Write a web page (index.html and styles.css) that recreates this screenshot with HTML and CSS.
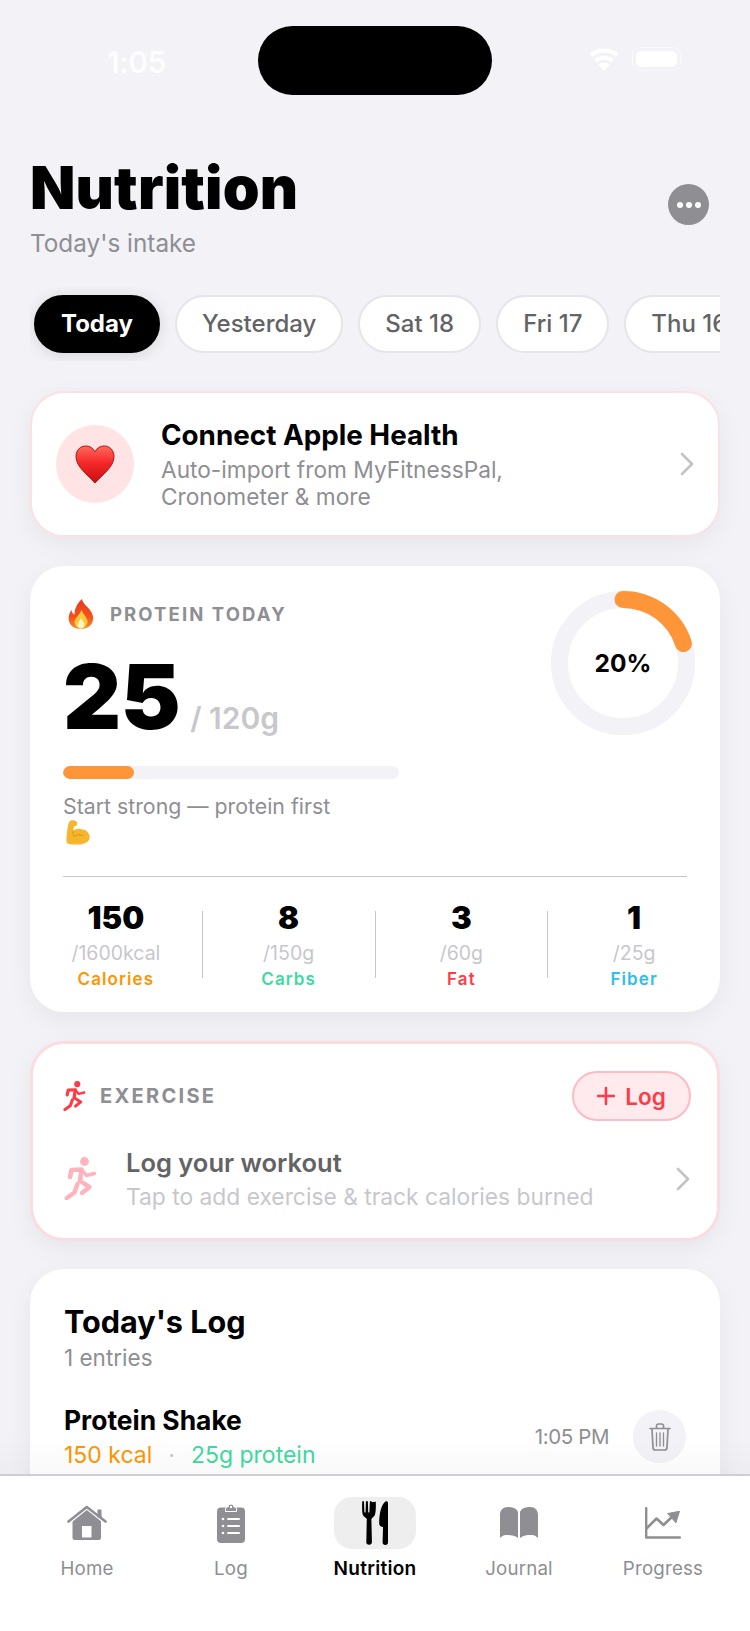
FILE: index.html
```html
<!DOCTYPE html>
<html lang="en">
<head>
  <meta charset="UTF-8" />
  <meta name="viewport" content="width=device-width, initial-scale=1.0"/>
  <title>Nutrition</title>
  <link rel="stylesheet" href="styles.css">
</head>
<body>

  <svg class="icon-defs" width="0" height="0">
    <defs>
      <symbol id="runner" viewBox="0 0 33 43">
        <circle cx="20.5" cy="4.5" r="4.4" fill="currentColor" />
        <g fill="none" stroke="currentColor" stroke-linecap="round" stroke-linejoin="round">
          <path d="M6 20 L7.5 13 L17.5 12.5 L16 24" stroke-width="4.6" />
          <path d="M18 13 L22.5 18.5 L30.5 16.5" stroke-width="3.4" />
          <path d="M16 24 L25.5 30 L18 36" stroke-width="4.4" />
          <path d="M13.5 27 L10.5 35.5 L2.8 41" stroke-width="4.4" />
        </g>
      </symbol>
      <symbol id="chevron" viewBox="0 0 14 24">
        <path d="M2 2 L12 12 L2 22" fill="none" stroke="currentColor" stroke-width="2.6" stroke-linecap="round" stroke-linejoin="round" />
      </symbol>
    </defs>
  </svg>

  <div class="app">
    <div class="status-bar">
      <span class="status-time">1:05</span>
      <div class="island"></div>
      <div class="status-icons">
        <svg class="wifi" width="32" height="23" viewBox="0 0 32 23">
          <path d="M16 23 L10.6 16.6 A8 8 0 0 1 21.4 16.6 Z" fill="#fff" />
          <path d="M7.4 12.9 A13 13 0 0 1 24.6 12.9" fill="none" stroke="#fff" stroke-width="4" />
          <path d="M2.6 7.6 A20.5 20.5 0 0 1 29.4 7.6" fill="none" stroke="#fff" stroke-width="4" />
        </svg>
        <div class="battery"><div class="battery-level"></div></div>
      </div>
    </div>

    <main>
      <header class="page-head">
        <div>
          <h1>Nutrition</h1>
          <p class="page-sub">Today's intake</p>
        </div>
        <button class="more-btn"><i></i><i></i><i></i></button>
      </header>

      <div class="day-strip">
        <span class="chip active">Today</span>
        <span class="chip">Yesterday</span>
        <span class="chip">Sat 18</span>
        <span class="chip">Fri 17</span>
        <span class="chip">Thu 16</span>
      </div>

      <section class="card health-card">
        <div class="health-icon">
          <svg width="40" height="39" viewBox="0 0 40 39">
            <defs>
              <linearGradient id="heartFill" x1="0" y1="0" x2="0" y2="1">
                <stop offset="0" stop-color="#ff6a5e" />
                <stop offset="0.45" stop-color="#f5282a" />
                <stop offset="1" stop-color="#c8100f" />
              </linearGradient>
            </defs>
            <path d="M20 38 C13 30 1 22 1 11.5 C1 5 5.6 1 10.8 1 C14.8 1 18 3 20 6.8 C22 3 25.2 1 29.2 1 C34.4 1 39 5 39 11.5 C39 22 27 30 20 38 Z" fill="url(#heartFill)" stroke="#b5100f" stroke-width="1" />
          </svg>
        </div>
        <div class="health-text">
          <h2>Connect Apple Health</h2>
          <p>Auto-import from MyFitnessPal,<br>Cronometer &amp; more</p>
        </div>
        <svg class="chevron" width="14" height="24"><use href="#chevron" /></svg>
      </section>

      <section class="card protein-card">
        <div class="protein-top">
          <div class="protein-main">
            <div class="section-label">
              <svg width="26" height="30" viewBox="0 0 26 30">
                <defs>
                  <linearGradient id="flameFill" x1="0" y1="0" x2="0" y2="1">
                    <stop offset="0" stop-color="#e8391c" />
                    <stop offset="0.6" stop-color="#f4521f" />
                    <stop offset="1" stop-color="#fb8c25" />
                  </linearGradient>
                </defs>
                <path d="M14 0 C15 5 19 7 22 11 C25 15 26 19 24.5 23 C23 27 18.5 30 13 30 C7 30 2 27 1 22 C0 18 1.5 13.5 3.5 11 C3.8 13.5 5 15 6.5 15.5 C6.5 9.5 9.5 4 14 0 Z" fill="url(#flameFill)" />
                <path d="M13.5 11 C14.5 14.5 18.5 17.5 19.5 21.5 C20 26 16.5 29.5 13 29.5 C9.5 29.5 6 26.5 6.5 22.5 C7 19 11.5 16 13.5 11 Z" fill="#fdc83a" />
                <path d="M13 19 C14 21.5 16.5 23.5 16.5 25.8 C16.5 28 14.6 29.5 13 29.5 C11.2 29.5 9.5 28 9.5 26 C9.5 23.8 12 22 13 19 Z" fill="#fff3c4" />
              </svg>
              <span class="label-text protein-label">PROTEIN TODAY</span>
            </div>
            <div class="protein-amount"><span class="protein-value">25</span><span class="protein-goal">/ 120g</span></div>
            <div class="bar"><div class="bar-fill" style="width: 21%"></div></div>
            <p class="protein-note">Start strong — protein first</p>
            <svg class="muscle" width="24" height="25" viewBox="0 0 24 25">
              <path d="M5 .6 C8 -.6 11.4 1 11.4 3.6 C11.4 5.6 9.4 6.6 7.8 6.6 L7.2 11 C9 9 13 8.2 15.2 9.2 C19.6 9.2 23.6 12.4 23.6 17 C23.6 22.4 18 24.6 11 24.6 C6 24.6 2 24.4 .8 22.4 C-.2 20 1 12 2 6 C2.4 3.5 3 1.5 5 .6 Z" fill="#f6b62c" />
              <path d="M7.2 11 C6.6 13 6.8 15 8 16.4 M8 16.4 C10.5 14.4 14 14.2 17 15.6" fill="none" stroke="#e09414" stroke-width="1" stroke-linecap="round" />
            </svg>
          </div>
          <div class="ring">
            <svg width="144" height="144" viewBox="0 0 144 144">
              <circle cx="72" cy="72" r="63.5" fill="none" stroke="#f2f2f7" stroke-width="17" />
              <!-- 20% of the circumference, starting at 12 o'clock -->
              <circle class="ring-arc" cx="72" cy="72" r="63.5" fill="none" stroke="#ff9539" stroke-width="17" stroke-linecap="round" stroke-dasharray="79.8 399" transform="rotate(-90 72 72)" />
            </svg>
            <span class="ring-text">20%</span>
          </div>
        </div>

        <div class="stats">
          <div class="stat">
            <b>150</b>
            <span class="stat-goal">/1600kcal</span>
            <span class="stat-name calories">Calories</span>
          </div>
          <div class="stat">
            <b>8</b>
            <span class="stat-goal">/150g</span>
            <span class="stat-name carbs">Carbs</span>
          </div>
          <div class="stat">
            <b>3</b>
            <span class="stat-goal">/60g</span>
            <span class="stat-name fat">Fat</span>
          </div>
          <div class="stat">
            <b>1</b>
            <span class="stat-goal">/25g</span>
            <span class="stat-name fiber">Fiber</span>
          </div>
        </div>
      </section>

      <section class="card exercise-card">
        <div class="exercise-head">
          <div class="section-label">
            <svg class="runner-small" width="23" height="30"><use href="#runner" /></svg>
            <span class="label-text">EXERCISE</span>
          </div>
          <button class="log-btn">
            <svg width="18" height="18" viewBox="0 0 18 18"><path d="M9 1 V17 M1 9 H17" stroke="currentColor" stroke-width="2.6" stroke-linecap="round" /></svg>
            Log
          </button>
        </div>
        <div class="exercise-row">
          <svg class="runner-big" width="33" height="43"><use href="#runner" /></svg>
          <div class="exercise-text">
            <h3>Log your workout</h3>
            <p>Tap to add exercise &amp; track calories burned</p>
          </div>
          <svg class="chevron" width="14" height="24"><use href="#chevron" /></svg>
        </div>
      </section>

      <section class="card log-card">
        <h2>Today's Log</h2>
        <p class="log-count">1 entries</p>
        <div class="log-entry">
          <div class="log-info">
            <h4>Protein Shake</h4>
            <p><span class="calories">150 kcal</span><span class="dot">·</span><span class="carbs">25g protein</span></p>
          </div>
          <span class="log-time">1:05 PM</span>
          <button class="trash-btn">
            <svg width="22" height="28" viewBox="0 0 22 28" fill="none" stroke="#8e8e93" stroke-width="1.7" stroke-linecap="round" stroke-linejoin="round">
              <path d="M1 5.5 H21" />
              <path d="M7.5 5 V3 A2 2 0 0 1 9.5 1 H12.5 A2 2 0 0 1 14.5 3 V5" />
              <path d="M3 6 L4 24.5 A2.5 2.5 0 0 0 6.5 27 H15.5 A2.5 2.5 0 0 0 18 24.5 L19 6" />
              <path d="M7.5 10 V23 M11 10 V23 M14.5 10 V23" stroke-width="1.3" />
            </svg>
          </button>
        </div>
      </section>
    </main>

    <nav class="tabbar">
      <a class="tab">
        <span class="tab-icon">
          <svg width="40" height="36" viewBox="0 0 40 36">
            <path d="M5.5 16 L20 4 L34 16 V32.5 A2.5 2.5 0 0 1 31.5 35 H8 A2.5 2.5 0 0 1 5.5 32.5 Z" fill="#8e8e93" />
            <path d="M1.5 16.5 L19.8 1.8 L38.5 16.5" fill="none" stroke="#fff" stroke-width="5" />
            <path d="M1.5 16.5 L19.8 2 L38.5 16.5" fill="none" stroke="#8e8e93" stroke-width="2.6" stroke-linecap="round" stroke-linejoin="round" />
            <rect x="30.5" y="4.5" width="4" height="8" fill="#8e8e93" />
            <rect x="15" y="21" width="9.5" height="11.5" fill="#fff" />
          </svg>
        </span>
        <span>Home</span>
      </a>
      <a class="tab">
        <span class="tab-icon">
          <svg width="28" height="40" viewBox="0 0 28 40">
            <rect x="0" y="4.5" width="28" height="35.5" rx="4" fill="#8e8e93" />
            <path d="M8.5 8.5 V6 A2 2 0 0 1 10.5 4 H11 A3 3 0 0 1 17 4 H17.5 A2 2 0 0 1 19.5 6 V8.5 Z" fill="#8e8e93" stroke="#fff" stroke-width="1" />
            <circle cx="14" cy="4" r="1.2" fill="#fff" />
            <g fill="#fff">
              <circle cx="6" cy="16" r="1.3" />
              <circle cx="6" cy="23" r="1.3" />
              <circle cx="6" cy="30" r="1.3" />
              <rect x="10" y="15" width="13" height="2" rx="1" />
              <rect x="10" y="22" width="13" height="2" rx="1" />
              <rect x="10" y="29" width="13" height="2" rx="1" />
            </g>
          </svg>
        </span>
        <span>Log</span>
      </a>
      <a class="tab tab-active">
        <span class="tab-icon">
          <svg width="26" height="44" viewBox="0 0 26 44" fill="#000">
            <path d="M.2 1 A.9 .9 0 0 1 2 1 L2.4 11 A.6 .6 0 0 0 3.6 11 L3.9 1 A1 1 0 0 1 5.9 1 L6.2 11 A.6 .6 0 0 0 7.4 11 L7.8 1 A.9 .9 0 0 1 9.6 1 L9.9 1 L12.4 1 A.9 .9 0 0 1 13.8 1 C14 7 13.8 12 12.6 14.5 C11.6 16.2 10 16.8 9.4 18 L9.9 41 A2.7 2.7 0 0 1 4.3 41 L4.8 18 C4 16.6 1.8 16 .9 14 C0 11.5 0 7 .2 1 Z" />
            <path d="M23.8 .3 C24.8 0 26 .6 26 2 V41.2 A2.7 2.7 0 0 1 20.6 41.2 L21 26 C19.2 26 17.2 25 17.2 22.4 C17.2 13 19 3.5 23.8 .3 Z" />
          </svg>
        </span>
        <span>Nutrition</span>
      </a>
      <a class="tab">
        <span class="tab-icon">
          <svg width="38" height="32" viewBox="0 0 38 32" fill="#8e8e93">
            <path d="M0 8 C0 3 3 0 8 0 C13 0 18 2 18 6 V31 C15 28.5 11 28 7 28 C4.5 28 2.5 28.6 .8 30.6 C.2 31 0 30.6 0 30 Z" />
            <path d="M38 8 C38 3 35 0 30 0 C25 0 20 2 20 6 V31 C23 28.5 27 28 31 28 C33.5 28 35.5 28.6 37.2 30.6 C37.8 31 38 30.6 38 30 Z" />
          </svg>
        </span>
        <span>Journal</span>
      </a>
      <a class="tab">
        <span class="tab-icon">
          <svg width="36" height="32" viewBox="0 0 36 32" fill="none" stroke="#8e8e93" stroke-width="2.4" stroke-linecap="round" stroke-linejoin="round">
            <path d="M1.2 1.2 V30.5 H34.8" />
            <path d="M2 21 L11.5 11.5 L18.5 18 L29 8" stroke-width="2.6" />
            <path d="M23 6.5 L34.5 4.3 L31 15.5 Z" fill="#8e8e93" stroke-width="1" />
          </svg>
        </span>
        <span>Progress</span>
      </a>
    </nav>
  </div>

</body>
</html>
```

FILE: styles.css
```css
* {
  box-sizing: border-box;
}

body {
  font-family: 'Inter', 'Liberation Sans', sans-serif;
  margin: 0;
  padding: 0;
  background-color: #f2f2f7;
  color: #000;
}

h1, h2, h3, h4, p {
  margin: 0;
}

button {
  font-family: inherit;
  cursor: pointer;
}

.icon-defs {
  display: block;
  height: 0;
}

.app {
  position: relative;
  width: 750px;
  height: 1631px;
  overflow: hidden;
}

/* status bar */
.status-bar {
  display: flex;
  align-items: center;
  height: 68px;
  margin-top: 26px;
  padding-left: 107px;
}

.status-time {
  width: 151px;
  margin-top: 3px;
  color: #fff;
  font-size: 30px;
  font-weight: 600;
  letter-spacing: -0.5px;
  opacity: 0.85;
}

.island {
  width: 234px;
  height: 69px;
  background-color: #000;
  border-radius: 35px;
}

.status-icons {
  display: flex;
  align-items: center;
  gap: 12px;
  margin-left: 96px;
  margin-top: -2px;
}

.battery {
  position: relative;
  width: 49px;
  height: 24px;
  padding: 3px;
  border: 1px solid #f9f9fc;
  border-radius: 8px;
}

.battery-level {
  width: 100%;
  height: 100%;
  background-color: #fff;
  border-radius: 5px;
}

/* heading */
main {
  padding: 0 30px;
}

.page-head {
  display: flex;
  justify-content: space-between;
  align-items: flex-end;
  margin-top: 60px;
  padding-right: 11px;
}

h1 {
  font-size: 59px;
  font-weight: 900;
  line-height: 68px;
  letter-spacing: 0.2px;
}

.page-sub {
  margin-top: 6px;
  color: #8e8e93;
  font-size: 24.3px;
  line-height: 30px;
}

.more-btn {
  display: flex;
  align-items: center;
  justify-content: center;
  gap: 3px;
  width: 41px;
  height: 41px;
  margin-bottom: 33px;
  padding: 0;
  background-color: #8e8e93;
  border: none;
  border-radius: 50%;
}

.more-btn i {
  width: 6px;
  height: 6px;
  background-color: #fff;
  border-radius: 50%;
}

/* day chips */
.day-strip {
  display: flex;
  gap: 15px;
  margin-top: 29px;
  padding: 8px 4px;
  overflow: hidden;
}

.chip {
  flex-shrink: 0;
  height: 58px;
  padding: 0 25px;
  background-color: #fff;
  border: 2px solid #e5e5ea;
  border-radius: 29px;
  color: #636366;
  font-size: 24px;
  font-weight: 500;
  line-height: 54px;
}

.chip.active {
  background-color: #000;
  border-color: #000;
  color: #fff;
  font-weight: 700;
  box-shadow: 0 2px 16px rgba(0, 0, 0, 0.12);
}

/* cards */
.card {
  background-color: #fff;
  border-radius: 34px;
  box-shadow: 0 8px 26px rgba(0, 0, 0, 0.055);
}

.health-card {
  display: flex;
  align-items: center;
  height: 146px;
  margin-top: 30px;
  padding: 0 24px 0 24px;
  border: 2px solid #fbe1e4;
}

.health-icon {
  display: flex;
  align-items: center;
  justify-content: center;
  width: 78px;
  height: 78px;
  background-color: #ffe3e5;
  border-radius: 50%;
}

.health-text {
  flex: 1;
  margin-top: -2px;
  margin-left: 27px;
}

.health-text h2 {
  font-size: 27.8px;
  font-weight: 700;
  line-height: 36px;
}

.health-text p {
  margin-top: 3px;
  color: #8e8e93;
  font-size: 22.7px;
  line-height: 27px;
}

.chevron {
  color: #c2c2c7;
  flex-shrink: 0;
}

.protein-card {
  margin-top: 29px;
  padding: 24px 33px 0;
  height: 446px;
}

.protein-top {
  display: flex;
  justify-content: space-between;
  height: 287px;
  border-bottom: 1px solid #c6c6c8;
}

.section-label {
  display: flex;
  align-items: center;
}

.protein-main {
  padding-top: 9px;
}

.protein-main .section-label svg {
  margin-left: 5px;
}

.label-text {
  margin-left: 14px;
  color: #8e8e93;
  font-size: 20px;
  font-weight: 700;
  letter-spacing: 2.3px;
}

.protein-label {
  margin-left: 16px;
  font-size: 18.5px;
  letter-spacing: 2.1px;
}

.protein-amount {
  display: flex;
  align-items: baseline;
  margin-top: 18px;
  height: 100px;
}

.protein-value {
  font-size: 90px;
  font-weight: 900;
  line-height: 100px;
  letter-spacing: -0.5px;
}

.protein-goal {
  margin-left: 10px;
  color: #c7c7cc;
  font-size: 30px;
  font-weight: 600;
}

.bar {
  width: 336px;
  height: 13px;
  margin-top: 19px;
  background-color: #f2f2f7;
  border-radius: 7px;
  overflow: hidden;
}

.bar-fill {
  height: 100%;
  background-color: #ff9539;
  border-radius: 7px;
}

.protein-note {
  margin-top: 14px;
  color: #8e8e93;
  font-size: 21.3px;
  line-height: 26px;
}

.muscle {
  display: block;
  margin: 1px 0 0 3px;
}

.ring {
  position: relative;
  width: 144px;
  height: 144px;
  margin-top: 1px;
  margin-right: -8px;
  flex-shrink: 0;
}

.ring-text {
  position: absolute;
  inset: 0;
  display: flex;
  align-items: center;
  justify-content: center;
  font-size: 24.5px;
  font-weight: 700;
}

/* the four columns span the whole card, wider than the divider above them */
.stats {
  display: flex;
  margin: 34px -33px 0;
}

.stat {
  display: flex;
  flex-direction: column;
  align-items: center;
  flex: 1;
  height: 67px;
  border-right: 1px solid #c6c6c8;
}

.stat:last-child {
  border-right: none;
}

.stat b {
  margin-top: -12px;
  font-size: 31px;
  font-weight: 900;
  line-height: 38px;
}

.stat-goal {
  margin-top: 4px;
  color: #c7c7cc;
  font-size: 19.5px;
  line-height: 24px;
}

.stat-name {
  margin-top: 3px;
  font-size: 17px;
  font-weight: 600;
  letter-spacing: 1.1px;
  line-height: 22px;
}

.calories { color: #ff9500; }
.carbs { color: #3ddaa0; }
.fat { color: #ff3b47; }
.fiber { color: #30bdf0; }

/* exercise */
.exercise-card {
  height: 200px;
  margin-top: 29px;
  padding: 27px 26px 0 30px;
  border: 3px solid #fbdce1;
}

.exercise-head {
  display: flex;
  justify-content: space-between;
  align-items: center;
}

.runner-small {
  color: #ff3b47;
}

.log-btn {
  display: flex;
  align-items: center;
  justify-content: center;
  gap: 10px;
  width: 119px;
  height: 50px;
  padding: 0;
  background-color: #ffebee;
  border: 2px solid #ffbac4;
  border-radius: 25px;
  color: #ff3b47;
  font-size: 22.5px;
  font-weight: 600;
}

.exercise-row {
  display: flex;
  align-items: center;
  margin-top: 25px;
  padding-right: 1px;
}

.runner-big {
  color: #ffb3bd;
  margin-left: 1px;
  flex-shrink: 0;
}

.exercise-text {
  flex: 1;
  margin-left: 29px;
}

.exercise-text h3 {
  color: #636366;
  font-size: 25.5px;
  font-weight: 600;
  line-height: 34px;
}

.exercise-text p {
  margin-top: 3px;
  color: #c7c7cc;
  font-size: 22.8px;
  line-height: 28px;
}

/* log list */
.log-card {
  height: 300px;
  margin-top: 28px;
  padding: 33px 34px 0;
}

.log-card h2 {
  font-size: 30.6px;
  font-weight: 700;
  line-height: 40px;
}

.log-count {
  margin-top: 2px;
  color: #8e8e93;
  font-size: 22.5px;
  line-height: 28px;
}

.log-entry {
  display: flex;
  align-items: center;
  margin-top: 31px;
}

.log-info {
  flex: 1;
}

.log-info h4 {
  font-size: 26.4px;
  font-weight: 700;
  line-height: 34px;
}

.log-info p {
  margin-top: 3px;
  font-size: 23px;
  line-height: 30px;
}

.dot {
  margin: 0 16px;
  color: #c7c7cc;
}

.log-time {
  margin-right: 24px;
  color: #8e8e93;
  font-size: 20.5px;
  letter-spacing: -0.4px;
}

.trash-btn {
  display: flex;
  align-items: center;
  justify-content: center;
  width: 53px;
  height: 53px;
  padding: 0;
  background-color: #f2f2f7;
  border: none;
  border-radius: 50%;
}

.tabbar {
  position: absolute;
  left: 0;
  right: 0;
  bottom: 0;
  display: grid;
  grid-template-columns: repeat(5, 144px);
  height: 157px;
  padding: 0 15px;
  background-color: #fff;
  border-top: 2px solid #cfcfd3;
}

.tabbar::before {
  content: "";
  position: absolute;
  left: 0;
  right: 0;
  top: -42px;
  height: 40px;
  background: linear-gradient(rgba(0, 0, 0, 0), rgba(0, 0, 0, 0.025));
}

.tab {
  display: flex;
  flex-direction: column;
  align-items: center;
  color: #8e8e93;
  font-size: 18.7px;
  line-height: 24px;
  letter-spacing: 0.2px;
}

.tab-icon {
  display: flex;
  align-items: center;
  justify-content: center;
  width: 82px;
  height: 52px;
  margin-top: 21px;
  margin-bottom: 8px;
  border-radius: 18px;
}

.tab-active {
  color: #000;
  font-weight: 600;
  font-size: 19px;
  letter-spacing: 0.3px;
}

.tab-active .tab-icon {
  background-color: #eeeeef;
}
```
